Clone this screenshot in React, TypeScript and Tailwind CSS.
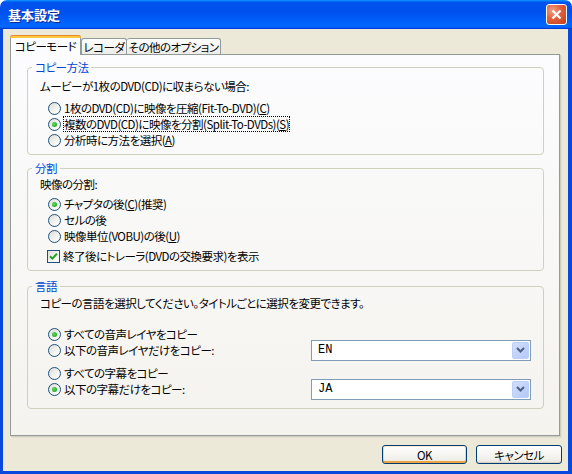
import React from 'react';

const jp = "font-['Noto_Sans_CJK_JP',sans-serif] [font-feature-settings:'palt']";

const Radio = ({ checked }: { checked?: boolean }) => (
  <span className="flex h-[13px] w-[13px] shrink-0 items-center justify-center rounded-full border border-[#1c5180] bg-[linear-gradient(135deg,#dcdcd7_0%,#f2f2ef_55%,#ffffff_100%)]">
    {checked && (
      <span className="h-[5px] w-[5px] rounded-full bg-[radial-gradient(circle_at_40%_40%,#5fde5b_0%,#21a121_80%)]" />
    )}
  </span>
);

const Check = () => (
  <span className="flex h-[13px] w-[13px] shrink-0 items-center justify-center border border-[#1c5180] bg-[linear-gradient(135deg,#dcdcd7_0%,#f4f4f1_55%,#ffffff_100%)]">
    <svg width="9" height="9" viewBox="0 0 9 9">
      <path d="M1 4.2 L3.4 6.6 L8 1.6" stroke="#21a121" strokeWidth="2" fill="none" />
    </svg>
  </span>
);

const Option = ({
  checked,
  focus,
  children,
}: {
  checked?: boolean;
  focus?: boolean;
  children: React.ReactNode;
}) => (
  <div className="flex h-[16px] items-center gap-[3px] whitespace-nowrap pl-[8px]">
    <Radio checked={checked} />
    <span className={focus ? 'leading-[14px] outline-1 outline-dotted outline-black' : 'leading-[14px]'}>
      {children}
    </span>
  </div>
);

const Group = ({
  title,
  className,
  children,
}: {
  title: string;
  className: string;
  children: React.ReactNode;
}) => (
  <fieldset className={`rounded-[4px] border border-[#d0d0bf] px-[12px] ${className}`}>
    <legend className="ml-[-8px] px-[3px] leading-[14px] text-[#0046d5]">{title}</legend>
    {children}
  </fieldset>
);

const Combo = ({ value }: { value: string }) => (
  <div className="flex h-[21px] w-[220px] shrink-0 items-center justify-between border border-[#7f9db9] bg-white pl-[6px] pr-[1px]">
    <span className="font-['Liberation_Mono',monospace] text-[12px] leading-none tracking-normal">{value}</span>
    <span className="flex h-[17px] w-[17px] items-center justify-center rounded-[2px] border border-[#bccff7] bg-[linear-gradient(135deg,#d2defd,#b4c9f7)]">
      <svg width="9" height="6" viewBox="0 0 9 6">
        <path d="M1 1 L4.5 4.5 L8 1" stroke="#4d6185" strokeWidth="2" fill="none" />
      </svg>
    </span>
  </div>
);

const Acc = ({ k }: { k: string }) => <u className="underline-offset-[1px]">{k}</u>;

export default function App() {
  return (
    <div className={`flex h-[474px] w-[572px] flex-col text-[11.5px] tracking-[-0.5px] text-black ${jp}`}>
      {/* title bar */}
      <div className="flex h-[29px] shrink-0 items-center justify-between rounded-t-[7px] bg-[linear-gradient(#0997ff_0%,#0053ee_8%,#0050ee_40%,#0066ff_88%,#0066ff_93%,#005bff_95%,#003dd7_96%,#003dd7_100%)] pl-[8px] pr-[5px]">
        <span className="text-[13px] font-bold leading-none tracking-normal text-white [text-shadow:1px_1px_0_#0c2a9c]">
          基本設定
        </span>
        <button className="flex h-[21px] w-[21px] items-center justify-center rounded-[3px] border border-white bg-[radial-gradient(circle_at_30%_30%,#f0a088_0%,#e0603c_45%,#c33e1c_100%)]">
          <svg width="11" height="11" viewBox="0 0 11 11">
            <path d="M1.5 1.5 L9.5 9.5 M9.5 1.5 L1.5 9.5" stroke="white" strokeWidth="2.2" />
          </svg>
        </button>
      </div>

      {/* dialog body */}
      <div className="flex flex-1 flex-col border-b-[3px] border-l-[3px] border-r-[4px] border-[#0848dd] bg-[#ece9d8] pt-[6px]">
        {/* tabs */}
        <div className="flex h-[19px] items-end whitespace-nowrap pl-[7px]">
          <div className="relative z-10 -mb-px flex h-[20px] w-[71px] items-start justify-center rounded-t-[3px] border-x border-[#919b9c] bg-[#fcfcfe]">
            <div className="absolute inset-x-[-1px] top-0 h-[3px] rounded-t-[3px] border-t border-[#e68b2c] bg-[#ffc73c]" />
            <span className="pt-[4px] leading-[14px]">コピーモード</span>
          </div>
          <div className="flex h-[16px] w-[46px] items-center justify-center rounded-t-[3px] border-x border-t border-[#919b9c] bg-[linear-gradient(#ffffff,#ecebe6)]">
            <span className="leading-[14px]">レコーダ</span>
          </div>
          <div className="flex h-[16px] w-[94px] items-center justify-center rounded-t-[3px] border-r border-t border-[#919b9c] bg-[linear-gradient(#ffffff,#ecebe6)]">
            <span className="leading-[14px]">その他のオプション</span>
          </div>
        </div>

        {/* tab page */}
        <div className="ml-[7px] h-[382px] w-[550px] border border-[#919b9c] bg-[linear-gradient(#fcfcfe,#f4f3ee)] pl-[16px] pr-[15px] pt-[5px] shadow-[1px_1px_0_#d0cebf,2px_2px_0_#e2dfd1]">
          <Group title="コピー方法" className="pb-[6px]">
            <div className="mt-[5px] leading-[14px]">ムービーが1枚のDVD(CD)に収まらない場合:</div>
            <div className="mt-[7px]">
              <Option>
                1枚のDVD(CD)に映像を圧縮(Fit-To-DVD)(<Acc k="C" />)
              </Option>
              <Option checked focus>
                複数のDVD(CD)に映像を分割(Split-To-DVDs)(<Acc k="S" />)
              </Option>
              <Option>
                分析時に方法を選択(<Acc k="A" />)
              </Option>
            </div>
          </Group>

          <Group title="分割" className="mt-[6px] pb-[6px]">
            <div className="mt-[2px] leading-[14px]">映像の分割:</div>
            <div className="mt-[5px]">
              <Option checked>
                チャプタの後(<Acc k="C" />)(推奨)
              </Option>
              <Option>セルの後</Option>
              <Option>
                映像単位(VOBU)の後(<Acc k="U" />)
              </Option>
            </div>
            <div className="mt-[4px] flex h-[16px] items-center gap-[3px] pl-[7px]">
              <Check />
              <span className="leading-[14px]">終了後にトレーラ(DVDの交換要求)を表示</span>
            </div>
          </Group>

          <Group title="言語" className="mt-[8px] pb-[11px]">
            <div className="mt-[3px] leading-[14px]">
              コピーの言語を選択してください。タイトルごとに選択を変更できます。
            </div>
            <div className="mt-[16px]">
              <Option checked>すべての音声レイヤをコピー</Option>
              <div className="flex h-[16px] items-center justify-between">
                <Option>以下の音声レイヤだけをコピー:</Option>
                <Combo value="EN" />
              </div>
            </div>
            <div className="mt-[7px]">
              <Option>すべての字幕をコピー</Option>
              <div className="flex h-[16px] items-center justify-between">
                <Option checked>以下の字幕だけをコピー:</Option>
                <Combo value="JA" />
              </div>
            </div>
          </Group>
        </div>

        {/* buttons */}
        <div className="mt-[9px] flex justify-end gap-[9px] pr-[6px]">
          <button className="h-[19px] w-[85px] rounded-[3px] border border-[#003c74] bg-[linear-gradient(#ffffff,#f0efe9_80%,#e3e1d8)] leading-[14px] shadow-[inset_0_-2px_0_#eea541,inset_0_1px_0_#fff0cf,inset_1px_0_0_#fbd38c,inset_-1px_0_0_#fbd38c]">
            OK
          </button>
          <button className="h-[19px] w-[86px] rounded-[3px] border border-[#003c74] bg-[linear-gradient(#ffffff,#f0efe9_80%,#e3e1d8)] leading-[14px] shadow-[inset_0_-1px_0_#d6d0c5]">
            キャンセル
          </button>
        </div>
      </div>
    </div>
  );
}
